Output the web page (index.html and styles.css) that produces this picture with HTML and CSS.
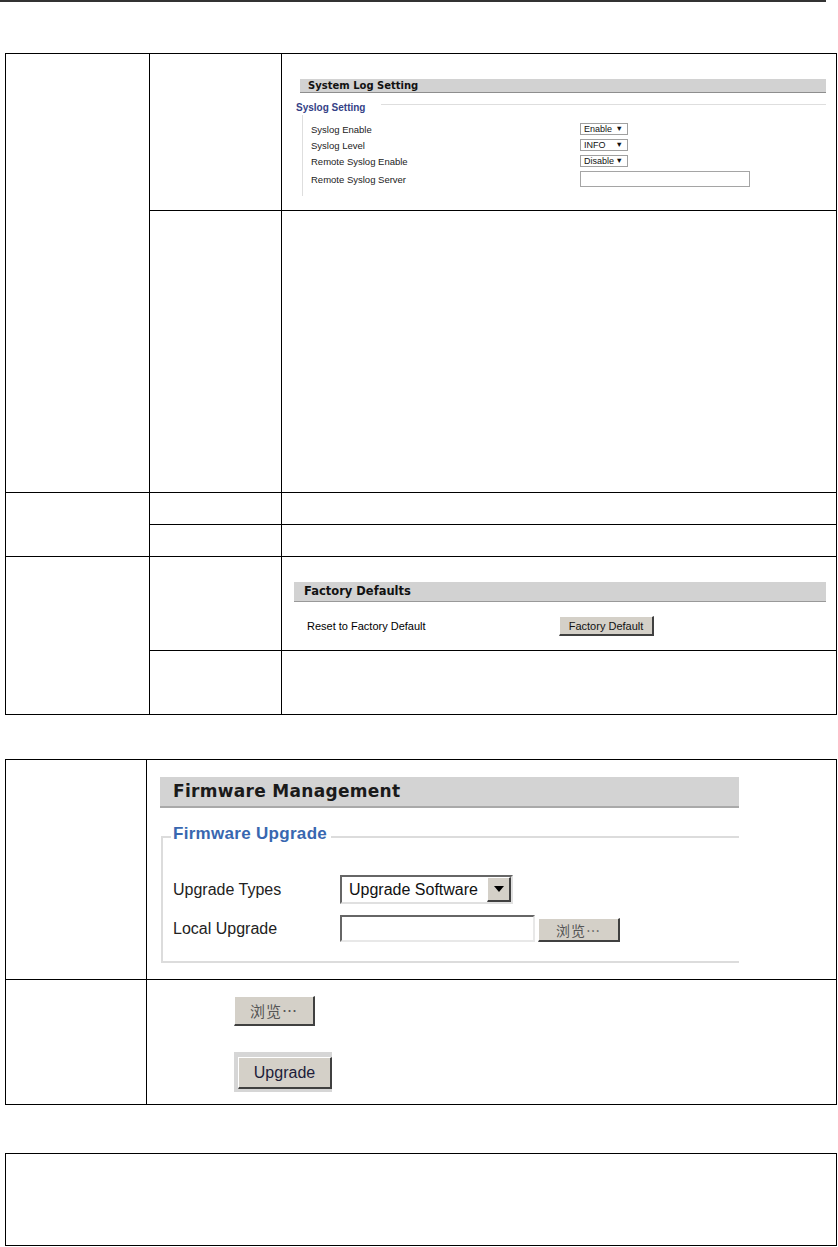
FILE: index.html
```html
<!DOCTYPE html>
<html lang="en">
<head>
    <meta charset="UTF-8">
    <title>System Log / Factory Defaults / Firmware</title>
    <link rel="stylesheet" href="styles.css">
</head>
<body>
    <div class="top-rule"></div>

    <!-- System log + factory defaults table -->
    <table class="doc-table t1">
        <colgroup>
            <col class="c1">
            <col class="c2">
            <col>
        </colgroup>
        <tr class="r-syslog">
            <td rowspan="2"></td>
            <td></td>
            <td>
                <div class="syslog">
                    <div class="sl-bar">System Log Setting</div>
                    <div class="sl-legend">
                        <span class="sl-title">Syslog Setting</span>
                        <span class="sl-line"></span>
                    </div>
                    <div class="sl-body">
                        <div class="sl-row">
                            <span>Syslog Enable</span>
                            <span class="sl-sel">Enable<i>&#9660;</i></span>
                        </div>
                        <div class="sl-row">
                            <span>Syslog Level</span>
                            <span class="sl-sel">INFO<i>&#9660;</i></span>
                        </div>
                        <div class="sl-row">
                            <span>Remote Syslog Enable</span>
                            <span class="sl-sel">Disable<i>&#9660;</i></span>
                        </div>
                        <div class="sl-row sl-row-last">
                            <span>Remote Syslog Server</span>
                            <span class="sl-input"></span>
                        </div>
                    </div>
                </div>
            </td>
        </tr>
        <tr class="r-desc">
            <td></td>
            <td></td>
        </tr>
        <tr class="r-small">
            <td rowspan="2"></td>
            <td></td>
            <td></td>
        </tr>
        <tr class="r-small">
            <td></td>
            <td></td>
        </tr>
        <tr class="r-factory">
            <td rowspan="2"></td>
            <td></td>
            <td>
                <div class="factory">
                    <div class="fd-bar">Factory Defaults</div>
                    <div class="fd-row">
                        <span>Reset to Factory Default</span>
                        <span class="win-btn fd-btn">Factory Default</span>
                    </div>
                </div>
            </td>
        </tr>
        <tr class="r-factory-desc">
            <td></td>
            <td></td>
        </tr>
    </table>

    <!-- Firmware table -->
    <table class="doc-table t2">
        <colgroup>
            <col class="c1b">
            <col>
        </colgroup>
        <tr class="r-fw">
            <td></td>
            <td>
                <div class="firmware">
                    <div class="fw-bar">Firmware Management</div>
                    <div class="fw-legend">
                        <span class="fw-corner"></span>
                        <span class="fw-title">Firmware Upgrade</span>
                        <span class="fw-line"></span>
                    </div>
                    <div class="fw-body">
                        <div class="fw-row">
                            <span>Upgrade Types</span>
                            <span class="fw-select">Upgrade Software<i class="fw-arrow"></i></span>
                        </div>
                        <div class="fw-row">
                            <span>Local Upgrade</span>
                            <span class="fw-file">
                                <span class="fw-input"></span>
                                <span class="win-btn cn-btn">浏览…</span>
                            </span>
                        </div>
                    </div>
                </div>
            </td>
        </tr>
        <tr class="r-fw-desc">
            <td></td>
            <td>
                <div class="fw-notes">
                    <span class="win-btn cn-btn big">浏览…</span>
                    <span class="up-frame"><span class="win-btn up-btn">Upgrade</span></span>
                </div>
            </td>
        </tr>
    </table>

    <div class="note-box"></div>
</body>
</html>
```
FILE: styles.css
```css
* {
    box-sizing: border-box;
}

body {
    margin: 0;
    width: 838px;
    font-family: "Liberation Sans", Arial, sans-serif;
    color: #000;
    background: #fff;
}

.top-rule {
    width: 826px;
    height: 2px;
    background-color: #333;
    margin-bottom: 51px;
}

/* Document tables */
.doc-table {
    border-collapse: collapse;
    margin-left: 5px;
    width: 832px;
    table-layout: fixed;
}

.doc-table td {
    border: 1px solid #000;
    padding: 0;
    vertical-align: top;
}

.c1 { width: 144px; }
.c2 { width: 132px; }
.c1b { width: 141px; }

.r-syslog td { height: 157px; }
.r-desc td { height: 282px; }
.r-small td { height: 32px; }
.r-factory td { height: 94px; }
.r-factory-desc td { height: 64px; }

.t2 {
    margin-top: 44px;
}

.r-fw td { height: 220px; }
.r-fw-desc td { height: 125px; }

/* Syslog screenshot */
.syslog {
    margin: 25px 10px 0 14px;
    font-size: 9.5px;
    color: #222;
}

.sl-bar {
    margin-left: 4px;
    height: 14px;
    line-height: 13px;
    padding-left: 8px;
    background-color: #d2d2d2;
    border-bottom: 1px solid #8e8e8e;
    font-family: "DejaVu Sans", sans-serif;
    font-weight: bold;
    font-size: 10px;
    color: #111;
}

.sl-legend {
    display: flex;
    margin-top: 7px;
    height: 15px;
}

.sl-title {
    font-weight: bold;
    font-size: 10px;
    line-height: 15px;
    color: #343f86;
}

.sl-line {
    flex: 1;
    margin: 4px 0 0 16px;
    border-top: 1px solid #dedede;
}

.sl-body {
    margin-left: 6px;
    border-left: 1px solid #dedede;
    padding: 6px 0 8px 8px;
}

.sl-row {
    display: grid;
    grid-template-columns: 269px auto;
    align-items: center;
    height: 16px;
}

.sl-row-last {
    height: 18px;
    margin-top: 1px;
}

.sl-sel {
    position: relative;
    width: 48px;
    height: 12px;
    line-height: 10px;
    padding-left: 3px;
    border: 1px solid #a0a0a0;
    background: #fff;
    font-size: 9px;
    color: #111;
}

.sl-sel i {
    position: absolute;
    right: 4px;
    top: 0;
    font-style: normal;
    font-size: 7.5px;
    line-height: 10px;
}

.sl-input {
    width: 170px;
    height: 16px;
    border: 1px solid #a5a5a5;
    background: #fff;
}

/* Classic grey buttons */
.win-btn {
    display: inline-flex;
    align-items: center;
    justify-content: center;
    background-color: #d4d0c8;
    border-top: 1px solid #fff;
    border-left: 1px solid #fff;
    border-right: 2px solid #404040;
    border-bottom: 2px solid #404040;
    color: #111;
}

/* Factory defaults screenshot */
.factory {
    margin: 25px 10px 0 12px;
}

.fd-bar {
    height: 20px;
    line-height: 19px;
    padding-left: 10px;
    background-color: #d2d2d2;
    border-bottom: 1px solid #999;
    font-family: "DejaVu Sans", sans-serif;
    font-weight: bold;
    font-size: 11.5px;
    color: #111;
}

.fd-row {
    display: grid;
    grid-template-columns: 252px auto;
    align-items: center;
    margin-top: 14px;
    padding-left: 13px;
    height: 20px;
    font-size: 11px;
}

.fd-btn {
    width: 95px;
    height: 20px;
    font-size: 11px;
}

/* Firmware screenshot */
.firmware {
    margin: 17px 0 0 12px;
    width: 580px;
}

.fw-bar {
    margin-left: 1px;
    height: 31px;
    line-height: 29px;
    padding-left: 13px;
    background-color: #d3d3d3;
    border-bottom: 2px solid #a9a9a9;
    font-family: "DejaVu Sans", sans-serif;
    font-weight: bold;
    font-size: 17px;
    letter-spacing: 0.3px;
    color: #1a1a1a;
}

.fw-legend {
    display: flex;
    margin: 17px 0 0 2px;
    height: 18px;
}

.fw-corner {
    width: 10px;
    margin-top: 11px;
    border-top: 2px solid #dcdcdc;
    border-left: 2px solid #dcdcdc;
}

.fw-title {
    padding: 0 4px 0 2px;
    font-weight: bold;
    font-size: 17px;
    letter-spacing: 0.3px;
    line-height: 18px;
    color: #3867b0;
}

.fw-line {
    flex: 1;
    margin-top: 11px;
    border-top: 2px solid #dcdcdc;
}

.fw-body {
    margin-left: 2px;
    border-left: 2px solid #dcdcdc;
    border-bottom: 2px solid #dcdcdc;
    padding: 32px 0 19px 10px;
    font-size: 16px;
    color: #222;
}

.fw-row {
    display: grid;
    grid-template-columns: 167px auto;
    align-items: center;
}

.fw-row + .fw-row {
    margin-top: 11px;
}

.fw-select {
    position: relative;
    width: 173px;
    height: 29px;
    line-height: 25px;
    padding-left: 7px;
    background: #fff;
    border: 2px solid;
    border-color: #666 #e0e0e0 #e0e0e0 #666;
    color: #111;
}

.fw-arrow {
    position: absolute;
    right: 0;
    top: 0;
    width: 24px;
    height: 25px;
    background-color: #d4d0c8;
    border-top: 1px solid #fff;
    border-left: 1px solid #fff;
    border-right: 2px solid #404040;
    border-bottom: 2px solid #404040;
}

.fw-arrow::after {
    content: "";
    position: absolute;
    left: 6px;
    top: 8px;
    border-left: 5px solid transparent;
    border-right: 5px solid transparent;
    border-top: 6px solid #000;
}

.fw-file {
    display: flex;
    align-items: flex-end;
    gap: 3px;
}

.fw-input {
    width: 195px;
    height: 27px;
    background: #fff;
    border: 2px solid;
    border-color: #666 #e8e8e8 #e8e8e8 #666;
}

.cn-btn {
    width: 82px;
    height: 24px;
    font-family: "Noto Sans CJK SC", sans-serif;
    font-size: 14px;
    color: #555;
    letter-spacing: 1px;
}

.fw-notes {
    display: flex;
    flex-direction: column;
    align-items: flex-start;
    margin: 16px 0 0 87px;
}

.cn-btn.big {
    width: 81px;
    height: 30px;
    font-size: 15px;
}

.up-frame {
    display: flex;
    margin-top: 26px;
    width: 98px;
    height: 40px;
    padding: 5px 0 3px 4px;
    background-color: #d6d6d6;
}

.up-btn {
    flex: 1;
    font-size: 16px;
    color: #1d1d3a;
}

/* Empty note box */
.note-box {
    margin: 48px 0 0 5px;
    width: 832px;
    height: 93px;
    border: 1px solid #000;
}
```
